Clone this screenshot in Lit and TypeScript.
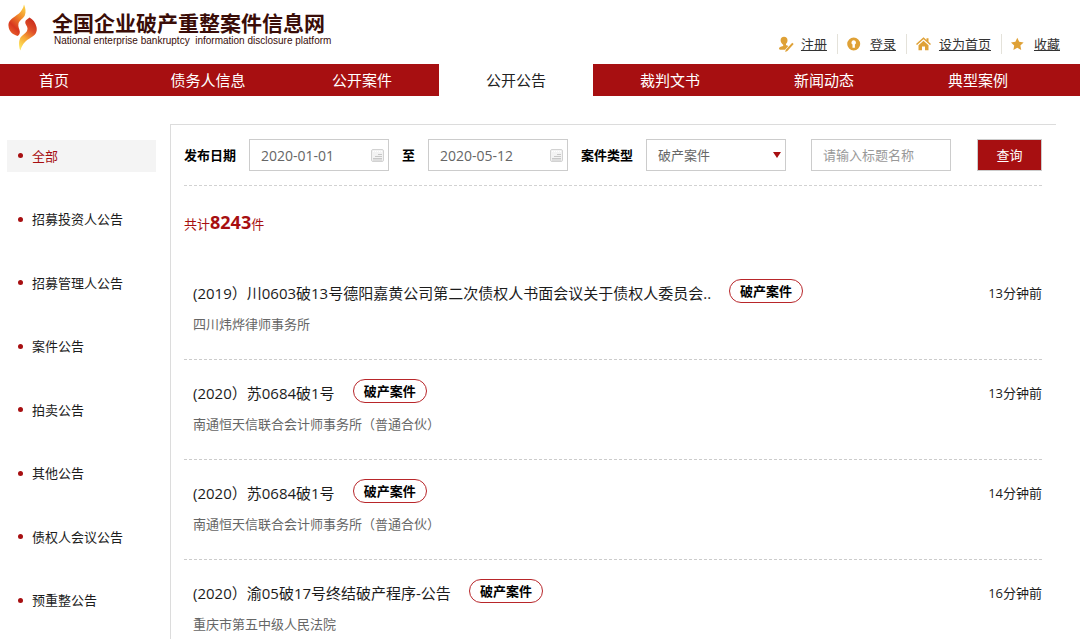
import { LitElement, html, css, svg } from "lit";
import { customElement, state } from "lit/decorators.js";
import { classMap } from "lit/directives/class-map.js";

interface Notice {
  title: string;
  type: string;
  org: string;
  time: string;
}

const NAV = ["首页", "债务人信息", "公开案件", "公开公告", "裁判文书", "新闻动态", "典型案例"];

const CATEGORIES = [
  "全部",
  "招募投资人公告",
  "招募管理人公告",
  "案件公告",
  "拍卖公告",
  "其他公告",
  "债权人会议公告",
  "预重整公告",
];

const NOTICES: Notice[] = [
  {
    title: "(2019）川0603破13号德阳嘉黄公司第二次债权人书面会议关于债权人委员会..",
    type: "破产案件",
    org: "四川炜烨律师事务所",
    time: "13分钟前",
  },
  { title: "(2020）苏0684破1号", type: "破产案件", org: "南通恒天信联合会计师事务所（普通合伙）", time: "13分钟前" },
  { title: "(2020）苏0684破1号", type: "破产案件", org: "南通恒天信联合会计师事务所（普通合伙）", time: "14分钟前" },
  { title: "(2020）渝05破17号终结破产程序-公告", type: "破产案件", org: "重庆市第五中级人民法院", time: "16分钟前" },
];

const userIcon = svg`
  <path d="M6 0.8c2.200 0 3.500 1.300 3.500 3.400 0 1.700-.7 2.800-1.500 3.500v1.300l2.300 1-3.300 3.700H2.200c-.8 0-1.200-.5-1.200-1.100 0-1.300 1.400-1.700 4.200-2.500V8.800C4.600 7.900 2.600 6.500 2.600 4.400 2.600 2.200 3.900.8 6 .8z"/>
  <path d="M14.200 6.800l1.500 1.300-6.300 7-2.200.8.600-2.200z"/>`;
const keyIcon = svg`
  <path fill-rule="evenodd" d="M6.700 1.500a6.500 6.500 0 1 1 0 13 6.500 6.500 0 0 1 0-13zM6.700 4.300a2.200 2.200 0 0 0-1.200 4.100v3.300h2.400V8.400A2.200 2.200 0 0 0 6.700 4.300z"/>`;
const homeIcon = svg`
  <path d="M7.500 1.200l3 2.700V2.300h2v3.400L15 8l-1 1.100-6.500-5.900L1 9.100 0 8z"/>
  <path d="M7.500 4.700l5 4.500v5.100H9v-3.800H6v3.800H2.500V9.200z"/>`;
const starIcon = svg`
  <path d="M6.300 1.800l1.900 4 4.400.6-3.200 3.100.8 4.500-3.900-2.200L2.400 14l.8-4.500L0 6.400l4.400-.6z"/>`;

const TOP_LINKS = [
  { label: "注册", icon: userIcon },
  { label: "登录", icon: keyIcon },
  { label: "设为首页", icon: homeIcon },
  { label: "收藏", icon: starIcon },
];

@customElement("app-root")
export class AppRoot extends LitElement {
  @state() private category = 0;

  static styles = css`
    :host {
      display: block;
      background: #fff;
      color: #1c1c1c;
      font-family: "Open Sans", "Noto Sans CJK SC", sans-serif;
      font-size: 13px;
      line-height: 20px;
    }
    * {
      box-sizing: border-box;
    }
    a {
      color: inherit;
      text-decoration: none;
    }
    ul {
      list-style: none;
      margin: 0;
      padding: 0;
    }
    .header {
      display: flex;
      justify-content: space-between;
      height: 64px;
      padding: 0 20px 0 7px;
    }
    .brand {
      display: flex;
      gap: 14px;
      padding-top: 4px;
    }
    .mark {
      width: 31px;
      height: 47px;
    }
    .names {
      display: flex;
      flex-direction: column;
      padding-top: 5px;
      color: #3a0d08;
      white-space: pre;
    }
    .name {
      margin: 0;
      font-size: 21px;
      line-height: 26px;
      font-weight: 700;
      font-family: "Noto Sans CJK SC", sans-serif;
    }
    .name-en {
      padding-left: 2px;
      font-family: "Liberation Sans", sans-serif;
      font-size: 10px;
      line-height: 12px;
    }
    .tools {
      display: flex;
      align-self: flex-end;
      padding-bottom: 10px;
    }
    .tools li + li {
      margin-left: 10px;
      padding-left: 9px;
      border-left: 1px solid #e4e2da;
    }
    .tools a {
      display: flex;
      align-items: center;
      gap: 7px;
      color: #333;
    }
    .tools svg {
      width: 16px;
      height: 16px;
      fill: #dfa136;
    }
    .tools span {
      text-decoration: underline;
    }
    .nav {
      background: #a70f11;
      overflow: hidden;
    }
    .nav ul {
      display: flex;
      margin: 0 25px 0 -23px;
    }
    .nav li {
      flex: 1;
    }
    .nav a {
      display: block;
      color: #fff;
      font-size: 15px;
      line-height: 32px;
      text-align: center;
    }
    .nav .current {
      background: #fff;
      color: #222;
    }
    .body {
      display: grid;
      grid-template-columns: 149px minmax(0, 1fr);
      column-gap: 14px;
      align-items: start;
      padding: 28px 24px 0 7px;
    }
    .side {
      display: grid;
      grid-auto-rows: 1fr;
      align-items: center;
      min-height: 508px;
    }
    .side a {
      display: flex;
      align-items: center;
      gap: 9px;
      height: 32px;
      padding-left: 11px;
    }
    .side a::before {
      content: "";
      width: 5px;
      height: 5px;
      border-radius: 50%;
      background: #a70f11;
    }
    .side .picked {
      background: #f4f4f4;
      color: #a70f11;
    }
    .main {
      border-top: 1px solid #dcdcdc;
      border-left: 1px solid #dcdcdc;
      padding: 14px 14px 0 13px;
    }
    .filters {
      display: flex;
      align-items: center;
      gap: 13px;
      padding-bottom: 14px;
      border-bottom: 1px dashed #d2d2d2;
    }
    .filters label {
      flex: none;
      color: #000;
      font-weight: 700;
    }
    .field {
      position: relative;
      flex: 0 1 140px;
      min-width: 0;
      height: 32px;
      border: 1px solid #ccc;
    }
    .keyword {
      margin: 0 12px;
    }
    .field input,
    .field select {
      display: block;
      width: 100%;
      height: 30px;
      border: 0;
      border-radius: 0;
      margin: 0;
      padding: 0 11px;
      background: transparent;
      appearance: none;
      outline: none;
      font: inherit;
      color: #666;
    }
    .field .date {
      font-size: 14px;
    }
    .field input::placeholder {
      color: #999;
      opacity: 1;
    }
    .calendar,
    .caret {
      position: absolute;
      pointer-events: none;
    }
    .calendar {
      top: 8px;
      right: 4px;
      width: 13px;
      height: 14px;
    }
    .caret {
      top: 12px;
      right: 4px;
      width: 8px;
      height: 6px;
      fill: #a70f11;
    }
    .query {
      flex: none;
      width: 65px;
      height: 32px;
      margin-left: auto;
      padding: 0;
      border: 1px solid #ccc;
      background: #a70f11;
      color: #fff;
      font: inherit;
    }
    .total {
      margin: 0;
      padding: 21px 0;
      line-height: 30px;
      color: #a70f11;
    }
    .total strong {
      font-size: 18px;
    }
    .notice {
      display: flex;
      justify-content: space-between;
      padding: 17px 0 20px 9px;
      border-bottom: 1px dashed #ccc;
    }
    .heading {
      display: flex;
      align-items: flex-start;
      gap: 18px;
    }
    .title {
      font-size: 15px;
      line-height: 32px;
    }
    .tag {
      flex: none;
      margin-top: 2px;
      padding: 0 10px;
      border: 1px solid #b8262a;
      border-radius: 12px;
      line-height: 22px;
      font-weight: 700;
      color: #000;
    }
    .org {
      margin: 0;
      line-height: 30px;
      color: #666;
    }
    .time {
      flex: none;
      line-height: 32px;
    }
  `;

  private renderDate(id: string, value: string) {
    return html`<div class="field">
      <input class="date" id=${id} type="text" .value=${value} />
      <svg class="calendar" viewBox="0 0 13 14" aria-hidden="true">
        <rect x="0.5" y="1.500" width="12" height="12" rx="1.500" fill="#f3f3f3" stroke="#d2d2d2" />
        <path d="M2 3.500h9" stroke="#fff" stroke-dasharray="1 1" />
        <path d="M7 6.500h4M4 8.500h7M2 10.500h9M2 12h9" stroke="#c8c8c8" />
      </svg>
    </div>`;
  }

  render() {
    return html`
      <header class="header">
        <div class="brand">
          <svg class="mark" viewBox="0 0 31 47" aria-hidden="true">
            <defs>
              <linearGradient id="upper" x1="0.8" y1="0" x2="0.3" y2="1">
                <stop offset="0" stop-color="#fbd045" />
                <stop offset="0.4" stop-color="#f0842a" />
                <stop offset="0.75" stop-color="#d8371f" />
                <stop offset="1" stop-color="#e8602a" />
              </linearGradient>
              <linearGradient id="lower" x1="0.7" y1="0" x2="0.3" y2="1">
                <stop offset="0" stop-color="#c62a1c" />
                <stop offset="0.35" stop-color="#e0502a" />
                <stop offset="0.65" stop-color="#f6a434" />
                <stop offset="1" stop-color="#fde35a" />
              </linearGradient>
            </defs>
            <path
              fill="url(#upper)"
              d="M17 0.500C18.500 4 19.200 8 17.800 11.500 16.500 14.500 12.500 16 11.500 19.500 10.700 22.500 12.500 25 12.800 27.500 13 29.500 12.200 31 10.500 32 5.500 30.500 2.500 27.500 1.700 23.500 1 20 1.500 17.500 4.500 15 8.500 11.500 15.500 9 17 0.500z"
            />
            <path
              fill="url(#lower)"
              d="M22.500 13.500C26 15.500 28.500 18.500 29.500 23 30.500 28 28.500 31 24 33.500 19 36.500 15.500 39.500 13.300 46.500 11.800 42.500 11.500 37 13.500 33.500 15.500 30.500 20.500 29 20.500 24.500 20.500 22 18 20.500 18.200 18 18.500 15.500 21 15 22.500 13.500z"
            />
          </svg>
          <div class="names">
            <h1 class="name">全国企业破产重整案件信息网</h1>
            <span class="name-en">National enterprise bankruptcy  information disclosure platform</span>
          </div>
        </div>
        <ul class="tools">
          ${TOP_LINKS.map(
            (link) => html`<li>
              <a href="#"><svg viewBox="0 0 16 16" aria-hidden="true">${link.icon}</svg><span>${link.label}</span></a>
            </li>`
          )}
        </ul>
      </header>
      <nav class="nav">
        <ul>
          ${NAV.map((name) => html`<li><a href="#" class=${classMap({ current: name === "公开公告" })}>${name}</a></li>`)}
        </ul>
      </nav>
      <div class="body">
        <ul class="side">
          ${CATEGORIES.map(
            (name, i) => html`<li>
              <a href="#" class=${classMap({ picked: i === this.category })} @click=${() => (this.category = i)}>${name}</a>
            </li>`
          )}
        </ul>
        <main class="main">
          <form class="filters" @submit=${(e: Event) => e.preventDefault()}>
            <label for="from">发布日期</label>
            ${this.renderDate("from", "2020-01-01")}
            <label for="to">至</label>
            ${this.renderDate("to", "2020-05-12")}
            <label for="type">案件类型</label>
            <div class="field">
              <select id="type">
                <option>破产案件</option>
              </select>
              <svg class="caret" viewBox="0 0 8 6" aria-hidden="true"><path d="M0 0h8L4 6z" /></svg>
            </div>
            <div class="field keyword">
              <input type="text" aria-label="标题名称" placeholder="请输入标题名称" />
            </div>
            <button class="query" type="submit">查询</button>
          </form>
          <p class="total">共计<strong>8243</strong>件</p>
          <ul>
            ${NOTICES.map(
              (n) => html`<li class="notice">
                <div>
                  <div class="heading">
                    <a class="title" href="#">${n.title}</a>
                    <span class="tag">${n.type}</span>
                  </div>
                  <p class="org">${n.org}</p>
                </div>
                <span class="time">${n.time}</span>
              </li>`
            )}
          </ul>
        </main>
      </div>
    `;
  }
}
